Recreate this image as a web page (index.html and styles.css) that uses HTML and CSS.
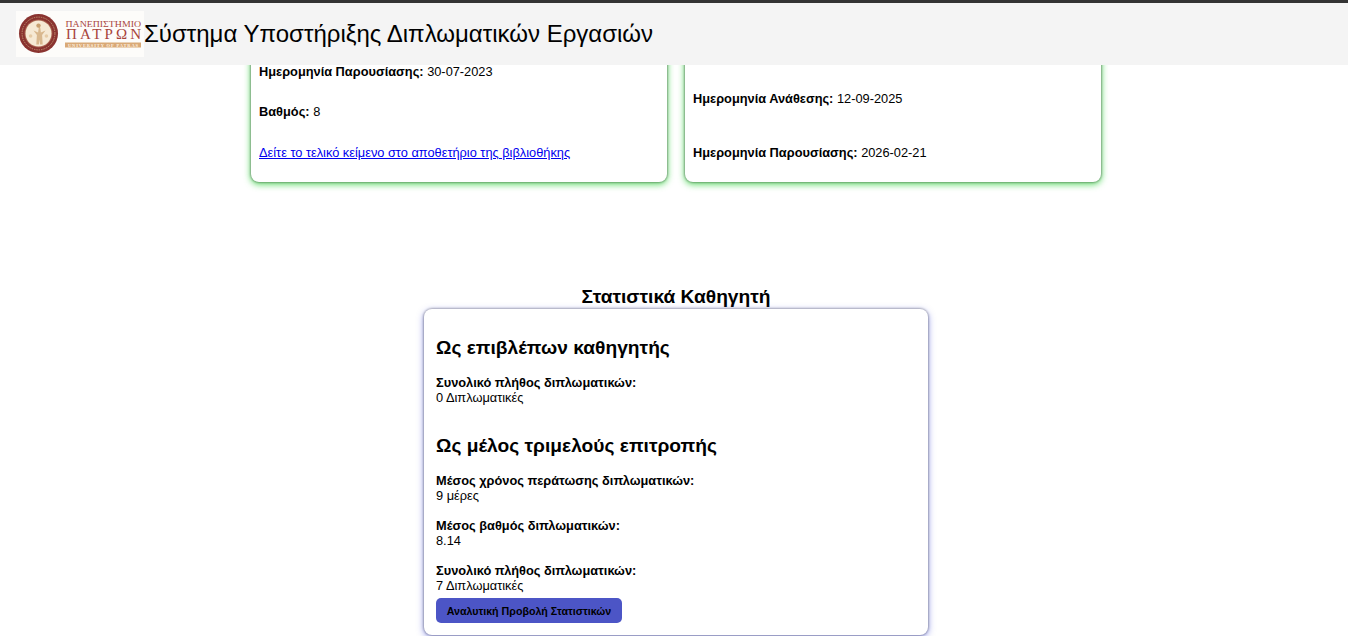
FILE: index.html
```html
<!DOCTYPE html>
<html lang="el">
<head>
<meta charset="utf-8">
<title>Σύστημα Υποστήριξης Διπλωματικών Εργασιών</title>
<link rel="stylesheet" href="styles.css">
</head>
<body>
<header class="site-header">
  <div class="logo">
    <svg width="128" height="46" viewBox="0 0 128 46" xmlns="http://www.w3.org/2000/svg" role="img" aria-label="Πανεπιστήμιο Πατρών">
      <rect width="128" height="46" fill="#fdfcfa"/>
      <circle cx="22.5" cy="22.5" r="19.5" fill="#8a3330"/>
      <circle cx="22.5" cy="22.5" r="16.4" fill="none" stroke="#c49a74" stroke-width=".9" stroke-dasharray="1.4 1"/>
      <circle cx="22.5" cy="22.5" r="14" fill="#a8604c"/>
      <circle cx="22.5" cy="22.5" r="13" fill="#f6e9d4"/>
      <path d="M22.5 12.5l1.8 4.5 .6 4.5 4.6-2-3.4 4.5 .6 9.5h-2.6l-.6-5-.6 5h-2.6l.6-9.5-3.4-4.5 4.6 2 .6-4.5z" fill="#d9b88e"/>
      <circle cx="22.5" cy="14.6" r="2.2" fill="#c8a070"/>
      <circle cx="14.6" cy="25" r="1.8" fill="#e6cba6"/>
      <circle cx="30.4" cy="25" r="1.8" fill="#e6cba6"/>
      <text x="49.5" y="16" class="logo-top" textLength="75.5" lengthAdjust="spacingAndGlyphs">ΠΑΝΕΠΙΣΤΗΜΙΟ</text>
      <text x="50" y="28" class="logo-main" textLength="75" lengthAdjust="spacing">ΠΑΤΡΩΝ</text>
      <rect x="49" y="31.5" width="76" height="5" fill="#d9a977"/>
      <text x="52" y="35.6" class="logo-sub" textLength="70" lengthAdjust="spacing">UNIVERSITY OF PATRAS</text>
    </svg>
  </div>
  <h1 class="site-title">Σύστημα Υποστήριξης Διπλωματικών Εργασιών</h1>
</header>

<main class="content">
  <section class="thesis-row">
    <article class="thesis-card">
      <p class="row-first"><strong>Ημερομηνία Παρουσίασης:</strong> 30-07-2023</p>
      <p class="row-grade"><strong>Βαθμός:</strong> 8</p>
      <p class="row-link"><a href="#">Δείτε το τελικό κείμενο στο αποθετήριο της βιβλιοθήκης</a></p>
    </article>
    <article class="thesis-card">
      <p class="row-first row-second-card"><strong>Ημερομηνία Ανάθεσης:</strong> 12-09-2025</p>
      <p class="row-wide"><strong>Ημερομηνία Παρουσίασης:</strong> 2026-02-21</p>
    </article>
  </section>

  <section class="stats">
    <h2 class="stats-title">Στατιστικά Καθηγητή</h2>
    <div class="stats-card">
      <h3 class="stats-heading">Ως επιβλέπων καθηγητής</h3>
      <p class="stat"><strong>Συνολικό πλήθος διπλωματικών:</strong><br>0 Διπλωματικές</p>
      <h3 class="stats-heading second">Ως μέλος τριμελούς επιτροπής</h3>
      <p class="stat"><strong>Μέσος χρόνος περάτωσης διπλωματικών:</strong><br>9 μέρες</p>
      <p class="stat"><strong>Μέσος βαθμός διπλωματικών:</strong><br>8.14</p>
      <p class="stat"><strong>Συνολικό πλήθος διπλωματικών:</strong><br>7 Διπλωματικές</p>
      <button class="stats-button" type="button">Αναλυτική Προβολή Στατιστικών</button>
    </div>
  </section>
</main>
</body>
</html>
```

FILE: styles.css
```css
* { box-sizing: border-box; }

html, body {
  height: 636px;
  overflow: hidden;
}

body {
  margin: 0;
  background: #fff;
  color: #000;
  font-family: "Liberation Sans", Arial, sans-serif;
  font-size: 12.8px;
  line-height: 15px;
}

.site-header {
  position: fixed;
  top: 0;
  left: 0;
  right: 0;
  z-index: 10;
  height: 65px;
  display: flex;
  align-items: center;
  padding: 0 0 0 16px;
  background: #f4f4f4;
  border-top: 3px solid #333;
}

.logo { display: flex; flex: none; }
.logo svg { display: block; }

.logo-top, .logo-main, .logo-sub {
  font-family: "Liberation Serif", serif;
}
.logo-top { font-size: 9px; fill: #a8443c; }
.logo-main { font-size: 15px; fill: #a8443c; }
.logo-sub { font-size: 4.5px; font-weight: 700; fill: #fff3e2; }

.site-title {
  margin: 0 0 1px;
  font-size: 24px;
  font-weight: 400;
  line-height: 28px;
}

.content {
  padding-left: 4px;
  display: flex;
  flex-direction: column;
  align-items: center;
}

.thesis-row {
  display: flex;
  gap: 18px;
  height: 182px;
}

.thesis-card {
  width: 416px;
  height: 182px;
  padding: 64px 8px 0;
  background: #fff;
  border-radius: 8px;
  box-shadow: 0 0 2px 1px rgba(0, 0, 0, .28), 0 2px 6px 1px rgba(70, 215, 80, .75);
}

.thesis-card p { margin: 0; }
.thesis-card .row-grade { margin-top: 25px; }
.thesis-card .row-link { margin-top: 26px; }
.thesis-card .row-second-card { padding-top: 27px; }
.thesis-card .row-wide { margin-top: 39px; }

.thesis-card a { color: #00e; text-decoration: underline; }

.stats {
  margin-top: 104px;
  display: flex;
  flex-direction: column;
  align-items: center;
}

.stats-title {
  margin: 0 0 1px;
  font-size: 19.2px;
  line-height: 22px;
  font-weight: 700;
}

.stats-card {
  width: 504px;
  height: 326px;
  padding: 27px 12px 0;
  background: #fff;
  border-radius: 8px;
  box-shadow: 0 0 2px 1px rgba(0, 0, 0, .25), 0 2px 6px 1px rgba(85, 95, 225, .5);
}

.stats-heading {
  margin: 0 0 16px;
  font-size: 19.2px;
  line-height: 23px;
  font-weight: 700;
}
.stats-heading.second { margin-top: 29px; }

.stat { margin: 0 0 15px; }
.stat:last-of-type { margin-bottom: 5px; }

.stats-button {
  display: block;
  width: 186px;
  height: 25px;
  padding: 0;
  border: 0;
  border-radius: 5px;
  background: #4c55c6;
  color: #000;
  font: 700 10.67px "Liberation Sans", Arial, sans-serif;
}
```
